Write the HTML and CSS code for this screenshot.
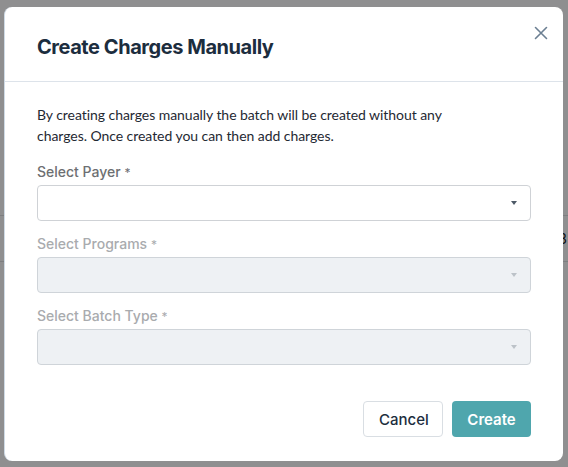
FILE: index.html
```html
<!DOCTYPE html>
<html lang="en">
<head>
  <meta charset="UTF-8" />
  <title>Create Charges Manually</title>
  <meta name="viewport" content="width=device-width, initial-scale=1.0" />
  <link rel="stylesheet" href="styles.css">
</head>
<body>
  <!-- page behind the dialog -->
  <div class="page">
    <div class="row row-text"><span>3</span></div>
    <div class="row"></div>
  </div>

  <div class="overlay">
    <div class="modal">
      <div class="modal-header">
        <h2>Create Charges Manually</h2>
        <button class="close" aria-label="Close">
          <svg width="14" height="14" viewBox="0 0 14 14">
            <path d="M1.5 1.5 L12.5 12.5 M12.5 1.5 L1.5 12.5" stroke="#6b7f92" stroke-width="1.6" stroke-linecap="round" />
          </svg>
        </button>
      </div>

      <div class="modal-body">
        <p class="intro">By creating charges manually the batch will be created without any charges. Once created you can then add charges.</p>

        <div class="field">
          <label>Select Payer <span class="req">*</span></label>
          <div class="select">
            <span class="caret"></span>
          </div>
        </div>

        <div class="field disabled">
          <label>Select Programs <span class="req">*</span></label>
          <div class="select">
            <span class="caret"></span>
          </div>
        </div>

        <div class="field disabled">
          <label>Select Batch Type <span class="req">*</span></label>
          <div class="select">
            <span class="caret"></span>
          </div>
        </div>
      </div>

      <div class="modal-footer">
        <button class="btn btn-cancel">Cancel</button>
        <button class="btn btn-primary">Create</button>
      </div>
    </div>
  </div>
</body>
</html>
```
FILE: styles.css
```css
:root {
  --ink: #1c2d3e;
  --teal: #4fa6ad;
  --line: #dde3ea;
  --shade: #8f8f90;
}

* {
  box-sizing: border-box;
}

body {
  margin: 0;
  font-family: Inter, 'Noto Sans', sans-serif;
  background: var(--shade);
  color: var(--ink);
  height: 467px;
  overflow: hidden;
  position: relative;
}

.page {
  padding-top: 215px;
}

.page .row {
  height: 46px;
  border-top: 1px solid #7d7e80;
}

.page .row-text {
  display: flex;
  justify-content: flex-end;
  align-items: center;
  font-size: 14px;
  color: #111;
}

.page .row-text span {
  margin-right: 1px;
}

.overlay {
  position: absolute;
  inset: 0;
  padding: 7px 5px 6px 4px;
}

.modal {
  background: #fff;
  border-radius: 8px;
  border-left: 1px solid #cfdbe6;
  height: 454px;
  display: flex;
  flex-direction: column;
}

.modal-header {
  height: 75px;
  border-bottom: 1px solid var(--line);
  display: flex;
  align-items: flex-start;
  justify-content: space-between;
  padding: 0 14px 0 32px;
}

.modal-header h2 {
  margin: 0;
  padding-top: 28px;
  font-size: 20px;
  font-weight: 700;
  letter-spacing: -0.45px;
}

.close {
  border: none;
  background: none;
  padding: 0;
  margin-top: 19px;
  cursor: pointer;
  width: 16px;
  height: 16px;
}

.modal-body {
  padding: 22px 32px 0;
  flex: 1;
}

.intro {
  max-width: 440px;
  margin: 0 0 16px;
  font-family: Lato, 'Noto Sans', sans-serif;
  font-size: 14px;
  line-height: 21px;
  letter-spacing: -0.05px;
  color: #1f2933;
}

.field {
  margin-bottom: 13px;
}

.field label {
  display: block;
  font-size: 14px;
  font-weight: 500;
  color: #6d6f72;
  padding-top: 1px;
  margin-bottom: 4px;
  line-height: 17px;
}

.field .req {
  font-weight: 400;
  font-size: 12px;
}

.select {
  height: 36px;
  border: 1px solid #cfd2d6;
  border-radius: 4px;
  background: #fff;
  display: flex;
  align-items: center;
  justify-content: flex-end;
  padding-right: 13px;
}

.caret {
  width: 0;
  height: 0;
  border-left: 3.5px solid transparent;
  border-right: 3.5px solid transparent;
  border-top: 4px solid #4c5966;
}

.field.disabled label {
  color: #a9abae;
}

.field.disabled .select {
  background: #eef1f4;
  border-color: #cfd4d9;
}

.field.disabled .caret {
  border-top-color: #bcc2c8;
}

.modal-footer {
  display: flex;
  justify-content: flex-end;
  gap: 9px;
  padding: 0 32px 24px;
}

.btn {
  height: 36px;
  border-radius: 4px;
  font-family: inherit;
  font-size: 15px;
  font-weight: 600;
  padding: 0 15px;
  cursor: pointer;
}

.btn-cancel {
  width: 80px;
  background: #fff;
  border: 1px solid #d9dee3;
  color: var(--ink);
  font-weight: 500;
}

.btn-primary {
  width: 79px;
  background: var(--teal);
  border: none;
  color: #fff;
}
```
